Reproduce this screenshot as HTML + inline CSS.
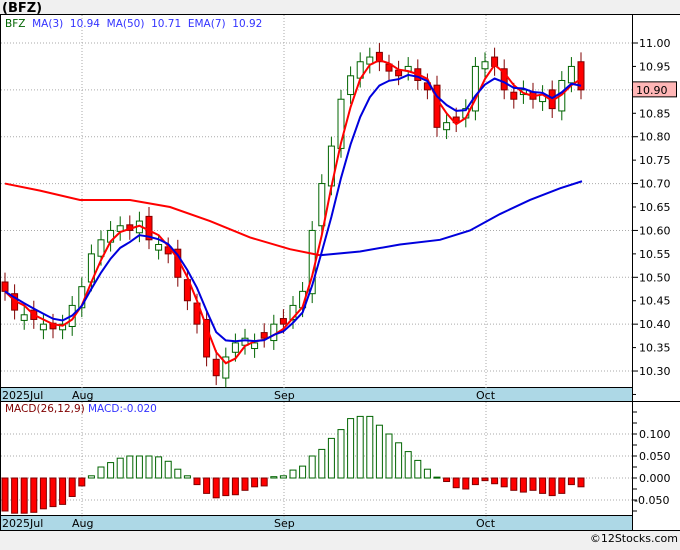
<!DOCTYPE html><html><head><style>
body{margin:0;background:#f0f0f0;width:680px;height:546px;overflow:hidden;font-family:"DejaVu Sans","Liberation Sans",sans-serif}
svg text{font-family:"DejaVu Sans","Liberation Sans",sans-serif}
</style></head><body>
<svg id="s" width="680" height="546" xmlns="http://www.w3.org/2000/svg">
<rect x="0" y="0" width="680" height="546" fill="#f0f0f0"/>
<text x="2" y="12" font-size="13" font-weight="bold" fill="#000">(BFZ)</text>
<rect x="1" y="15" width="679" height="515" fill="#fff"/>
<line x1="0.5" y1="15" x2="0.5" y2="531" stroke="#000"/>
<line x1="0" y1="14.5" x2="680" y2="14.5" stroke="#000"/>
<rect x="1" y="388" width="631" height="13" fill="#add8e6"/>
<line x1="0" y1="387.5" x2="632" y2="387.5" stroke="#000"/>
<line x1="0" y1="401.5" x2="680" y2="401.5" stroke="#000"/>
<rect x="1" y="516" width="631" height="14" fill="#add8e6"/>
<line x1="0" y1="515.5" x2="632" y2="515.5" stroke="#000"/>
<line x1="0" y1="530.5" x2="680" y2="530.5" stroke="#000"/>
<line x1="632.5" y1="15" x2="632.5" y2="531" stroke="#000"/>
<g id="g"></g>
<text x="5" y="27" font-size="10.5" xml:space="preserve"><tspan fill="#006400">BFZ</tspan><tspan fill="#3333ff">  MA(3)  10.94  MA(50)  10.71  EMA(7)  10.92</tspan></text>
<text x="5" y="412" font-size="10.5" fill="#800000">MACD(26,12,9)</text>
<text x="88" y="412" font-size="10.5" fill="#3333ff">MACD:-0.020</text>
<g font-size="11" fill="#000">
<text x="2" y="399">2025Jul</text><text x="72" y="399">Aug</text><text x="274" y="399">Sep</text><text x="476" y="399">Oct</text>
<text x="2" y="527">2025Jul</text><text x="72" y="527">Aug</text><text x="274" y="527">Sep</text><text x="476" y="527">Oct</text>
</g>
<text x="678" y="542" font-size="11" text-anchor="end" fill="#000">©12Stocks.com</text>
</svg>
<script>
var g=document.getElementById('g'),h='';
function Y(p){return 43+(11-p)/0.05*23.43}
function M(v){return 478-v/0.05*22}
for(var p=10.3;p<=11.01;p+=0.1){var y=Y(p);h+='<line x1="1" y1="'+y+'" x2="632" y2="'+y+'" stroke="#aaa" stroke-dasharray="1,2"/>';}
for(var p=10.25;p<=11.04;p+=0.05){var y=Y(p);h+='<line x1="632" y1="'+y+'" x2="'+(Math.round(p*100)%10==0?638:636)+'" y2="'+y+'" stroke="#000"/>';}
for(var p=10.3;p<=11.01;p+=0.05){if(Math.abs(p-10.9)<0.01)continue;h+='<text x="639" y="'+(Y(p)+4)+'" font-size="11">'+p.toFixed(2)+'</text>';}
[0.1,0.05,0,-0.05].forEach(function(v){h+='<line x1="1" y1="'+M(v)+'" x2="632" y2="'+M(v)+'" stroke="#aaa" stroke-dasharray="1,2"/>';});
for(var v=-0.075;v<=0.15;v+=0.025){h+='<line x1="632" y1="'+M(v)+'" x2="637" y2="'+M(v)+'" stroke="#000"/>';}
[[0.1,'0.100'],[0.05,'0.050'],[0,'0.000'],[-0.05,'-0.050']].forEach(function(a){h+='<text x="'+(a[1][0]=='-'?634:639)+'" y="'+(M(a[0])+4)+'" font-size="11">'+a[1]+'</text>';});
[82,284,486].forEach(function(x){h+='<line x1="'+x+'" y1="15" x2="'+x+'" y2="530" stroke="#aaa" stroke-dasharray="1,2"/>';});
var c=[10.47,10.43,10.42,10.41,10.40,10.39,10.40,10.44,10.48,10.55,10.58,10.60,10.61,10.60,10.62,10.58,10.57,10.55,10.50,10.45,10.40,10.33,10.29,10.33,10.36,10.37,10.36,10.37,10.40,10.40,10.44,10.47,10.60,10.70,10.78,10.88,10.93,10.96,10.97,10.96,10.94,10.93,10.95,10.92,10.90,10.82,10.83,10.83,10.86,10.95,10.96,10.95,10.90,10.88,10.90,10.88,10.89,10.86,10.92,10.95,10.90];
var m=[-0.075,-0.08,-0.08,-0.078,-0.07,-0.065,-0.06,-0.042,-0.018,0.005,0.025,0.035,0.045,0.05,0.05,0.05,0.048,0.038,0.02,0.005,-0.015,-0.035,-0.045,-0.04,-0.038,-0.028,-0.02,-0.018,0.003,0.005,0.018,0.027,0.05,0.065,0.09,0.11,0.135,0.14,0.14,0.12,0.1,0.08,0.06,0.04,0.02,0.002,-0.008,-0.022,-0.025,-0.015,-0.006,-0.013,-0.02,-0.028,-0.032,-0.028,-0.035,-0.04,-0.035,-0.015,-0.02];
function X(i){return 5+9.6*i}
for(var i=0;i<c.length;i++){var x=X(i),cl=c[i],op=i?c[i-1]+((i%3==0)?0.01:-0.005):cl+0.02;if(Math.abs(op-cl)<0.008)op=cl+(i%2?0.012:-0.012);
var hi=Math.max(op,cl)+0.02,lo=Math.min(op,cl)-0.02,up=cl>op;var col=up?'#006400':'#800000';
h+='<line x1="'+x+'" y1="'+Y(hi)+'" x2="'+x+'" y2="'+Y(lo)+'" stroke="'+col+'"/>';
var t=Y(Math.max(op,cl)),b=Y(Math.min(op,cl));
h+='<rect x="'+(x-3)+'" y="'+t+'" width="6" height="'+(b-t)+'" fill="'+(up?'#fff':'#ff0000')+'" stroke="'+col+'"/>';
var v=m[i],y0=M(0),y1=M(v);h+='<rect x="'+(x-3)+'" y="'+Math.min(y0,y1)+'" width="6" height="'+Math.max(1,Math.abs(y1-y0))+'" fill="'+(v>0?'#fff':'#ff0000')+'" stroke="'+(v>0?'#006400':'#800000')+'"/>';}
var r='',bl='',e=c[0];for(var i=0;i<c.length;i++){var a=c.slice(Math.max(0,i-2),i+1);var s=a.reduce(function(p,q){return p+q},0)/a.length;r+=X(i)+','+Y(s)+' ';e=i?e+(c[i]-e)*0.33:c[0];bl+=X(i)+','+Y(e)+' ';}
h+='<polyline points="5,'+Y(10.70)+' 40,'+Y(10.685)+' 80,'+Y(10.665)+' 130,'+Y(10.665)+' 170,'+Y(10.65)+' 210,'+Y(10.62)+' 250,'+Y(10.585)+' 290,'+Y(10.56)+' 320,'+Y(10.547)+'" fill="none" stroke="#ff0000" stroke-width="2"/>';
h+='<polyline points="320,'+Y(10.547)+' 360,'+Y(10.555)+' 400,'+Y(10.57)+' 440,'+Y(10.58)+' 470,'+Y(10.60)+' 500,'+Y(10.635)+' 530,'+Y(10.665)+' 560,'+Y(10.69)+' 582,'+Y(10.705)+'" fill="none" stroke="#0000dd" stroke-width="2"/>';
h+='<polyline points="'+r+'" fill="none" stroke="#ff0000" stroke-width="2"/>';
h+='<polyline points="'+bl+'" fill="none" stroke="#0000dd" stroke-width="2"/>';
h+='<rect x="632.5" y="'+(Y(10.9)-8)+'" width="44" height="15" fill="#ffb6b6" stroke="#000"/><text x="636" y="'+(Y(10.9)+4)+'" font-size="11">10.90</text>';
g.innerHTML=h;
</script>
</body></html>
